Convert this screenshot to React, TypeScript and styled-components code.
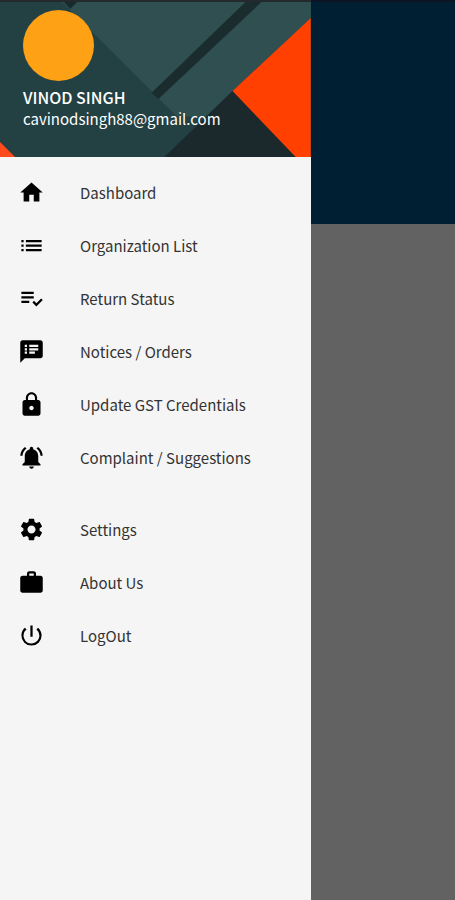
import React from "react";
import styled, { createGlobalStyle } from "styled-components";
import type { IconType } from "react-icons";
import {
  MdHome,
  MdList,
  MdPlaylistAddCheck,
  MdSpeakerNotes,
  MdLock,
  MdNotificationsActive,
  MdSettings,
  MdWork,
  MdPowerSettingsNew,
} from "react-icons/md";

const GlobalStyle = createGlobalStyle`
  * { box-sizing: border-box; }
  body {
    margin: 0;
    background: #626262;
    font-family: "Noto Sans CJK SC", "Noto Sans", sans-serif;
  }
`;

const Screen = styled.div`
  display: flex;
  min-height: 100vh;
`;

const Drawer = styled.aside`
  flex: 0 0 68.3%;
  display: flex;
  flex-direction: column;
  background: #f5f5f5;
`;

const Header = styled.header`
  position: relative;
  display: flex;
  flex-direction: column;
  height: 157px;
  padding: 10px 23px 0;
  overflow: hidden;
  background: #234143;
  color: #ffffff;
`;

const Artwork = styled.svg`
  position: absolute;
  inset: 0;
  width: 100%;
  height: 100%;
`;

const Avatar = styled.div`
  position: relative;
  width: 71px;
  height: 71px;
  border-radius: 50%;
  background: #ffa114;
`;

const UserName = styled.div`
  position: relative;
  margin-top: 6px;
  font-size: 16px;
  font-weight: 500;
  line-height: 21px;
`;

const UserEmail = styled.div`
  position: relative;
  font-size: 15px;
  line-height: 21px;
`;

const Nav = styled.nav`
  display: flex;
  flex-direction: column;
  gap: 19px;
  padding-top: 9px;
`;

const Group = styled.ul`
  margin: 0;
  padding: 0;
  list-style: none;
`;

const ItemLink = styled.a`
  display: flex;
  align-items: center;
  gap: 35px;
  height: 53px;
  padding-left: 18px;
  color: #333333;
  font-size: 15px;
  line-height: 25px;
  text-decoration: none;

  svg {
    flex: none;
    width: 27px;
    height: 27px;
    color: #000000;
  }
`;

const Page = styled.main`
  flex: 1;
  background: #626262;
`;

const Banner = styled.div`
  height: 224px;
  border-top: 2px solid #0b1524;
  background: #001f33;
`;

type Item = { label: string; icon: IconType };

const groups: Item[][] = [
  [
    { label: "Dashboard", icon: MdHome },
    { label: "Organization List", icon: MdList },
    { label: "Return Status", icon: MdPlaylistAddCheck },
    { label: "Notices / Orders", icon: MdSpeakerNotes },
    { label: "Update GST Credentials", icon: MdLock },
    { label: "Complaint / Suggestions", icon: MdNotificationsActive },
  ],
  [
    { label: "Settings", icon: MdSettings },
    { label: "About Us", icon: MdWork },
    { label: "LogOut", icon: MdPowerSettingsNew },
  ],
];

export default function App() {
  return (
    <Screen>
      <GlobalStyle />
      <Drawer>
        <Header>
          <Artwork viewBox="0 0 310 157" preserveAspectRatio="none" aria-hidden="true">
            <rect width="310" height="157" fill="#234143" />
            <path d="M60 0H310V18L232 91L205 117L176 112Z" fill="#2f4f50" />
            <path d="M60 0L158 98L176 116L205 117" fill="#2f4f50" />
            <path d="M62 0H79L70 9Z" fill="#192a2d" />
            <path d="M247 0H263L158 99L151 93Z" fill="#1b2c2e" />
            <path d="M232 91L296 157H164Z" fill="#1b292c" />
            <path d="M310 18V157H295L232 91Z" fill="#ff4000" />
            <path d="M0 142L15 157H0Z" fill="#ff4a1c" />
            <rect width="310" height="2" fill="#23292d" />
          </Artwork>
          <Avatar />
          <UserName>VINOD SINGH</UserName>
          <UserEmail>cavinodsingh88@gmail.com</UserEmail>
        </Header>
        <Nav aria-label="Main menu">
          {groups.map((items) => (
            <Group key={items[0].label}>
              {items.map(({ label, icon: Icon }) => (
                <li key={label}>
                  <ItemLink href="#">
                    <Icon aria-hidden="true" />
                    {label}
                  </ItemLink>
                </li>
              ))}
            </Group>
          ))}
        </Nav>
      </Drawer>
      <Page>
        <Banner />
      </Page>
    </Screen>
  );
}
